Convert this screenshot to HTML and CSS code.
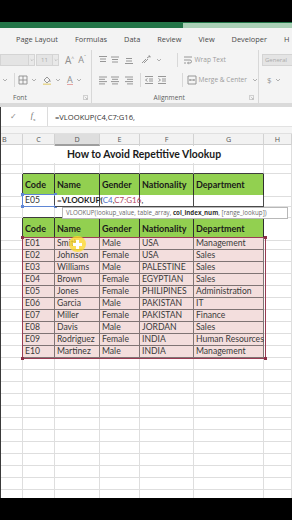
FILE: index.html
```html
<!DOCTYPE html>
<html lang="en">
<head>
  <meta charset="UTF-8" />
  <meta name="viewport" content="width=device-width, initial-scale=1" />
  <title>How to Avoid Repetitive Vlookup</title>
  <link rel="stylesheet" href="styles.css">
</head>
<body>
  <div class="screen">
    <div class="topbar"></div>
    <div class="titlebar"><div class="searchbox"></div></div>

    <!-- Pestañas -->
    <nav class="tabs">
      <span>Page Layout</span>
      <span>Formulas</span>
      <span>Data</span>
      <span>Review</span>
      <span>View</span>
      <span>Developer</span>
      <span>H</span>
    </nav>

    <!-- Cinta -->
    <div class="ribbon">
      <div class="group group-font">
        <div class="tool-row">
          <span class="box box-name"></span>
          <span class="dropbox"><svg class="chev" viewBox="0 0 6 4"><path d="M1 1l2 2 2-2"/></svg></span>
          <span class="box box-size">11</span>
          <span class="dropbox"><svg class="chev" viewBox="0 0 6 4"><path d="M1 1l2 2 2-2"/></svg></span>
          <span class="grow">A<sup>^</sup></span>
          <span class="grow shrink">A<sup>ˇ</sup></span>
        </div>
        <div class="tool-row">
          <svg class="chev chev-first" viewBox="0 0 6 4"><path d="M1 1l2 2 2-2"/></svg>
          <span class="vsep vsep-font"></span>
          <svg class="icon icon-border" viewBox="0 0 10 10"><path d="M1 1h8v8H1zM5 1v8M1 5h8"/></svg>
          <svg class="chev" viewBox="0 0 6 4"><path d="M1 1l2 2 2-2"/></svg>
          <svg class="icon icon-fill" viewBox="0 0 10 10"><path d="M2 5l3-3 3 3-3 3zM8 5.5v1.5"/><path class="bar-fill" d="M1 9.2h8"/></svg>
          <svg class="chev" viewBox="0 0 6 4"><path d="M1 1l2 2 2-2"/></svg>
          <span class="font-color">A</span>
          <svg class="chev" viewBox="0 0 6 4"><path d="M1 1l2 2 2-2"/></svg>
        </div>
        <div class="group-label">
          <span class="label-font">Font</span>
          <svg class="launcher launcher-font" viewBox="0 0 6 6"><path d="M0.5 0.5h5v5h-5zM2 2l3 3M3.5 5H5V3.5"/></svg>
        </div>
      </div>

      <div class="group group-align">
        <div class="tool-row">
          <svg class="icon icon-al first" viewBox="0 0 10 10"><path d="M1 1.5h8M2 4h6M2 6.5h6"/></svg>
          <svg class="icon icon-al" viewBox="0 0 10 10"><path d="M1 3h8M2 5.5h6M2 8h6" transform="translate(0 -1)"/></svg>
          <svg class="icon icon-al last" viewBox="0 0 10 10"><path d="M2 3.5h6M2 6h6M1 8.5h8"/></svg>
          <svg class="icon icon-orient" viewBox="0 0 12 10"><path d="M1 8l4-4M3 8l4-4M6 3l3-2M7.5 1H9v1.5"/></svg>
          <svg class="chev" viewBox="0 0 6 4"><path d="M1 1l2 2 2-2"/></svg>
          <span class="vsep vsep-align"></span>
          <svg class="icon icon-wrap" viewBox="0 0 10 10"><path d="M1 2h8M1 5h6a1.5 1.5 0 0 1 0 3H5M1 8h2M5.5 6.8L4.5 8l1 1.2"/></svg>
          <span class="cmd">Wrap Text</span>
        </div>
        <div class="tool-row">
          <svg class="icon icon-al first" viewBox="0 0 10 10"><path d="M1 2h8M1 4.3h6M1 6.6h8M1 8.9h6"/></svg>
          <svg class="icon icon-al" viewBox="0 0 10 10"><path d="M1 2h8M2 4.3h6M1 6.6h8M2 8.9h6"/></svg>
          <svg class="icon icon-al last" viewBox="0 0 10 10"><path d="M1 2h8M3 4.3h6M1 6.6h8M3 8.9h6"/></svg>
          <span class="vsep vsep-mid"></span>
          <svg class="icon icon-indent" viewBox="0 0 10 10"><path d="M1 1.5h8M5 4h4M5 6h4M1 8.5h8M3.5 3.5L1.5 5l2 1.5"/></svg>
          <svg class="icon icon-indent" viewBox="0 0 10 10"><path d="M1 1.5h8M5 4h4M5 6h4M1 8.5h8M1.5 3.5L3.5 5l-2 1.5"/></svg>
          <span class="vsep vsep-align"></span>
          <svg class="icon icon-merge" viewBox="0 0 10 10"><path d="M1 1h8v8H1zM2.5 5h5M3.5 4L2.5 5l1 1M6.5 4l1 1-1 1"/></svg>
          <span class="cmd">Merge &amp; Center</span>
          <svg class="chev chev-merge" viewBox="0 0 6 4"><path d="M1 1l2 2 2-2"/></svg>
        </div>
        <div class="group-label">
          <span class="label-align">Alignment</span>
          <svg class="launcher launcher-align" viewBox="0 0 6 6"><path d="M0.5 0.5h5v5h-5zM2 2l3 3M3.5 5H5V3.5"/></svg>
        </div>
      </div>

      <div class="group group-number">
        <div class="tool-row">
          <span class="box box-general">General</span>
        </div>
        <div class="tool-row">
          <span class="dollar">$</span>
          <svg class="chev" viewBox="0 0 6 4"><path d="M1 1l2 2 2-2"/></svg>
        </div>
      </div>
    </div>
    <div class="ribbon-edge"></div>

    <!-- Hoja -->
    <div class="sheet">
      <div class="formula-bar">
        <div class="fb-icons">
          <span class="fb-check">✓</span>
          <span class="fb-fx"><i>f</i><sub>x</sub></span>
        </div>
        <div class="fb-input">=VLOOKUP(C4,C7:G16,</div>
      </div>
      <div class="fb-gap"></div>

      <div class="col-heads">
        <div class="ch ch-b">B</div>
        <div class="ch">C</div>
        <div class="ch sel">D</div>
        <div class="ch">E</div>
        <div class="ch">F</div>
        <div class="ch">G</div>
        <div class="ch">H</div>
      </div>

      <div class="grid">
        <div class="row h18">
          <div class="cell"></div>
          <div class="cell title">How to Avoid Repetitive Vlookup</div>
          <div class="cell"></div>
        </div>
        <div class="row h11">
          <div class="cell"></div>
          <div class="cell eb"></div><div class="cell eb"></div><div class="cell eb"></div><div class="cell eb"></div><div class="cell eb"></div>
          <div class="cell"></div>
        </div>
        <div class="row h21">
          <div class="cell er"></div>
          <div class="cell hd">Code</div>
          <div class="cell hd">Name</div>
          <div class="cell hd">Gender</div>
          <div class="cell hd">Nationality</div>
          <div class="cell hd">Department</div>
          <div class="cell"></div>
        </div>
        <div class="row h12 row-edit">
          <div class="cell er"></div>
          <div class="cell tc">E05</div>
          <div class="cell tc formula"><b>=VLOOKUP(</b><span class="ref-blue">C4</span>,<span class="ref-red">C7:G16</span>,</div>
          <div class="cell tc"></div>
          <div class="cell tc"></div>
          <div class="cell tc"></div>
          <div class="cell"></div>
        </div>
        <div class="row h11">
          <div class="cell"></div>
          <div class="cell eb"></div><div class="cell eb"></div><div class="cell eb"></div><div class="cell eb"></div><div class="cell eb"></div>
          <div class="cell"></div>
        </div>
        <div class="row h20">
          <div class="cell er"></div>
          <div class="cell hd">Code</div>
          <div class="cell hd">Name</div>
          <div class="cell hd">Gender</div>
          <div class="cell hd">Nationality</div>
          <div class="cell hd">Department</div>
          <div class="cell"></div>
        </div>

        <div class="row h12"><div class="cell er"></div><div class="cell dc">E01</div><div class="cell dc">Smith</div><div class="cell dc">Male</div><div class="cell dc">USA</div><div class="cell dc">Management</div><div class="cell"></div></div>
        <div class="row h12"><div class="cell er"></div><div class="cell dc">E02</div><div class="cell dc">Johnson</div><div class="cell dc">Female</div><div class="cell dc">USA</div><div class="cell dc">Sales</div><div class="cell"></div></div>
        <div class="row h12"><div class="cell er"></div><div class="cell dc">E03</div><div class="cell dc">Williams</div><div class="cell dc">Male</div><div class="cell dc">PALESTINE</div><div class="cell dc">Sales</div><div class="cell"></div></div>
        <div class="row h12"><div class="cell er"></div><div class="cell dc">E04</div><div class="cell dc">Brown</div><div class="cell dc">Female</div><div class="cell dc">EGYPTIAN</div><div class="cell dc">Sales</div><div class="cell"></div></div>
        <div class="row h12"><div class="cell er"></div><div class="cell dc">E05</div><div class="cell dc">Jones</div><div class="cell dc">Female</div><div class="cell dc">PHILIPINES</div><div class="cell dc">Administration</div><div class="cell"></div></div>
        <div class="row h12"><div class="cell er"></div><div class="cell dc">E06</div><div class="cell dc">Garcia</div><div class="cell dc">Male</div><div class="cell dc">PAKISTAN</div><div class="cell dc">IT</div><div class="cell"></div></div>
        <div class="row h12"><div class="cell er"></div><div class="cell dc">E07</div><div class="cell dc">Miller</div><div class="cell dc">Female</div><div class="cell dc">PAKISTAN</div><div class="cell dc">Finance</div><div class="cell"></div></div>
        <div class="row h12"><div class="cell er"></div><div class="cell dc">E08</div><div class="cell dc">Davis</div><div class="cell dc">Male</div><div class="cell dc">JORDAN</div><div class="cell dc">Sales</div><div class="cell"></div></div>
        <div class="row h12"><div class="cell er"></div><div class="cell dc">E09</div><div class="cell dc">Rodriguez</div><div class="cell dc">Female</div><div class="cell dc">INDIA</div><div class="cell dc">Human Resources</div><div class="cell"></div></div>
        <div class="row h12"><div class="cell er"></div><div class="cell dc">E10</div><div class="cell dc">Martinez</div><div class="cell dc">Male</div><div class="cell dc">INDIA</div><div class="cell dc">Management</div><div class="cell"></div></div>

        <div class="row h12"><div class="cell"></div><div class="cell"></div><div class="cell"></div><div class="cell"></div><div class="cell"></div><div class="cell"></div><div class="cell"></div></div>
        <div class="row h12"><div class="cell"></div><div class="cell"></div><div class="cell"></div><div class="cell"></div><div class="cell"></div><div class="cell"></div><div class="cell"></div></div>
        <div class="row h12"><div class="cell"></div><div class="cell"></div><div class="cell"></div><div class="cell"></div><div class="cell"></div><div class="cell"></div><div class="cell"></div></div>
        <div class="row h12"><div class="cell"></div><div class="cell"></div><div class="cell"></div><div class="cell"></div><div class="cell"></div><div class="cell"></div><div class="cell"></div></div>
        <div class="row h12"><div class="cell"></div><div class="cell"></div><div class="cell"></div><div class="cell"></div><div class="cell"></div><div class="cell"></div><div class="cell"></div></div>
        <div class="row h12"><div class="cell"></div><div class="cell"></div><div class="cell"></div><div class="cell"></div><div class="cell"></div><div class="cell"></div><div class="cell"></div></div>
        <div class="row h12"><div class="cell"></div><div class="cell"></div><div class="cell"></div><div class="cell"></div><div class="cell"></div><div class="cell"></div><div class="cell"></div></div>
        <div class="row h12"><div class="cell"></div><div class="cell"></div><div class="cell"></div><div class="cell"></div><div class="cell"></div><div class="cell"></div><div class="cell"></div></div>
        <div class="row h12"><div class="cell"></div><div class="cell"></div><div class="cell"></div><div class="cell"></div><div class="cell"></div><div class="cell"></div><div class="cell"></div></div>
        <div class="row h12"><div class="cell"></div><div class="cell"></div><div class="cell"></div><div class="cell"></div><div class="cell"></div><div class="cell"></div><div class="cell"></div></div>
        <div class="row h12"><div class="cell"></div><div class="cell"></div><div class="cell"></div><div class="cell"></div><div class="cell"></div><div class="cell"></div><div class="cell"></div></div>
        <div class="row h12"><div class="cell"></div><div class="cell"></div><div class="cell"></div><div class="cell"></div><div class="cell"></div><div class="cell"></div><div class="cell"></div></div>

        <!-- Resaltados de referencias y ayuda de la fórmula -->
        <div class="ref-box ref-c4"><i class="knob tl"></i><i class="knob tr"></i><i class="knob bl"></i><i class="knob br"></i></div>
        <div class="ref-box ref-range"><i class="knob tl"></i><i class="knob tr"></i><i class="knob bl"></i><i class="knob br"></i></div>
        <div class="tooltip">VLOOKUP(lookup_value, table_array, <b>col_index_num</b>, [range_lookup])</div>
        <div class="cursor-spot"><span class="cursor-plus"></span></div>
      </div>
    </div>
    <div class="bottombar"></div>
  </div>
</body>
</html>
```

FILE: styles.css
```css
/* Base */
* {
  box-sizing: border-box;
}

body {
  margin: 0;
  background-color: #000;
  font-family: 'Open Sans', sans-serif;
}

.screen {
  width: 292px;
  height: 520px;
  overflow: hidden;
  display: flex;
  flex-direction: column;
  background-color: #000;
}

.topbar {
  flex: none;
  height: 22px;
}

.titlebar {
  flex: none;
  height: 6px;
  background-color: #237548;
  display: flex;
  justify-content: flex-end;
}

.searchbox {
  width: 109px;
  margin-top: 1px;
  background-color: #a9d0b6;
}

/* Pestañas */
.tabs {
  flex: none;
  height: 22px;
  background-color: #f3f3f3;
  display: flex;
  align-items: center;
  gap: 17px;
  padding-left: 16px;
  font-size: 7.4px;
  color: #4a4a4a;
  white-space: nowrap;
}

/* Cinta */
.ribbon {
  flex: none;
  height: 53px;
  background-color: #f4f4f4;
  display: flex;
  color: #8e8e8e;
}

.group {
  position: relative;
  display: flex;
  flex-direction: column;
  padding-top: 1px;
  border-right: 1px solid #d8d8d8;
}

.group-font {
  width: 96px;
}

.group-align {
  width: 168px;
}

.group-number {
  flex: 1;
  border-right: none;
}

.tool-row {
  height: 17px;
  display: flex;
  align-items: center;
  margin-bottom: 3px;
  white-space: nowrap;
}

.chev {
  width: 6px;
  height: 4px;
  fill: none;
  stroke: #9e9e9e;
  stroke-width: 0.8;
  margin-left: 3px;
}

.icon {
  width: 10px;
  height: 10px;
  fill: none;
  stroke: #8c8c8c;
  stroke-width: 0.9;
}

.box {
  height: 12px;
  background-color: #e4e4e4;
  border: 1px solid #d4d4d4;
  font-size: 6px;
  line-height: 10px;
  color: #aaa;
}

.box-name {
  width: 29px;
}

.dropbox {
  width: 6px;
  height: 12px;
  display: flex;
  align-items: center;
  justify-content: center;
  background-color: #e9e9e9;
  border: 1px solid #d4d4d4;
  border-left: none;
}

.dropbox .chev {
  margin-left: 0;
  width: 4px;
}

.box-size {
  width: 17px;
  margin-left: 1px;
  padding-left: 4px;
}

.grow {
  font-size: 10px;
  margin-left: 6px;
  color: #8e8e8e;
}

.grow sup {
  font-size: 5px;
}

.grow.shrink {
  font-size: 9px;
  margin-left: 4px;
}

.chev-first {
  margin-left: 2px;
}

.vsep {
  width: 1px;
  height: 14px;
  background-color: #d8d8d8;
}

.vsep-font {
  margin-left: 6px;
}

.icon-border {
  margin-left: 3px;
}

.icon-fill {
  margin-left: 5px;
}

.icon-fill .bar-fill {
  stroke: #e6d58a;
  stroke-width: 1.4;
}

.font-color {
  margin-left: 6px;
  font-size: 9px;
  line-height: 9px;
  color: #8e8e8e;
  border-bottom: 1.5px solid #e3a3a3;
}

.group-label {
  margin-top: auto;
  height: 12px;
  display: flex;
  align-items: center;
  font-size: 6.6px;
  color: #5e5e5e;
}

.label-font {
  margin-left: 13px;
}

.launcher {
  width: 5px;
  height: 5px;
  fill: none;
  stroke: #b0b0b0;
  stroke-width: 0.7;
}

.launcher-font {
  margin-left: auto;
  margin-right: 3px;
}

.icon-al {
  margin-left: 2px;
}

.icon-al.first {
  margin-left: 6px;
}

.icon-al.last {
  margin-left: 4px;
}

.icon-orient {
  width: 12px;
  margin-left: 7px;
}

.vsep-align {
  margin-left: 15px;
}

.icon-wrap {
  margin-left: 5px;
}

.cmd {
  margin-left: 2px;
  font-size: 6.6px;
  color: #9c9c9c;
}

.vsep-mid {
  margin-left: 6px;
}

.icon-indent {
  margin-left: 3px;
}

.icon-merge {
  margin-left: 4px;
}

.chev-merge {
  margin-left: 5px;
}

.label-align {
  margin-left: 62px;
}

.launcher-align {
  margin-left: auto;
  margin-right: 4px;
}

.box-general {
  width: 30px;
  margin-left: 3px;
  padding-left: 2px;
  border-right: none;
}

.dollar {
  margin-left: 8px;
  font-size: 8px;
  color: #959595;
}

.ribbon-edge {
  flex: none;
  height: 4px;
  background-color: #dadada;
}

/* Hoja de cálculo */
.sheet {
  flex: 1;
  display: flex;
  flex-direction: column;
  background-color: #fff;
  border-left: 1px solid #3a3a3a;
  overflow: hidden;
}

.formula-bar {
  flex: none;
  height: 20px;
  display: flex;
  align-items: center;
  background-color: #fff;
  border-bottom: 1px solid #e2e2e2;
}

.fb-icons {
  width: 47px;
  height: 100%;
  display: flex;
  align-items: center;
  border-right: 1px solid #dcdcdc;
}

.fb-check {
  margin-left: 9px;
  font-family: 'DejaVu Sans', sans-serif;
  font-size: 8px;
  color: #8a8a8a;
}

.fb-fx {
  margin-left: 14px;
  font-family: 'Liberation Serif', serif;
  font-size: 8px;
  color: #6a6a6a;
}

.fb-fx sub {
  font-size: 5px;
}

.fb-input {
  margin-left: 7px;
  font-size: 7.6px;
  color: #333;
}

.fb-gap {
  flex: none;
  height: 6px;
  background-color: #f5f5f5;
}

.col-heads {
  flex: none;
  height: 12px;
  display: grid;
  grid-template-columns: 22px 32px 45px 40px 54px 70px 28px;
  background-color: #f2f2f2;
  border-bottom: 1px solid #cfcfcf;
  border-top: 1px solid #e0e0e0;
}

.ch {
  border-right: 1px solid #d2d2d2;
  text-align: center;
  font-size: 7.2px;
  line-height: 10px;
  color: #555;
}

.ch-b {
  text-align: left;
  padding-left: 1px;
}

.ch.sel {
  background-color: #dedede;
  border-bottom: 2px solid #9e9e9e;
}

.grid {
  position: relative;
  font-family: 'Lato', sans-serif;
  font-size: 8.6px;
  color: #333;
}

.row {
  display: grid;
  grid-template-columns: 22px 32px 45px 40px 54px 70px 28px;
}

.h11 { height: 11px; }
.h12 { height: 12px; }
.h18 { height: 18px; }
.h20 { height: 20px; }
.h21 { height: 21px; }

.cell {
  border-right: 1px solid #dedede;
  border-bottom: 1px solid #dedede;
  padding-left: 2px;
  white-space: nowrap;
  line-height: 11px;
}

.title {
  grid-column: span 5;
  text-align: center;
  font-weight: 700;
  font-size: 10.4px;
  line-height: 19px;
  color: #1a1a1a;
}

.eb {
  border-bottom-color: #3d3d3d;
}

.er {
  border-right-color: #3d3d3d;
}

.hd {
  background-color: #92d050;
  border-color: #2f2f2f;
  font-weight: 700;
  font-size: 9px;
  line-height: 22px;
  color: #1a1a1a;
}

.tc {
  border-color: #4a4a4a;
  background-color: #fff;
}

/* Texto de la celda en edición, que se desborda sobre E4 */
.formula {
  position: relative;
  z-index: 1;
  overflow: visible;
  font-size: 8px;
  color: #1e1e1e;
}

.formula b {
  font-weight: 700;
}

.ref-blue {
  color: #4f74c8;
}

.ref-red {
  color: #b0465f;
}

.dc {
  background-color: #f3dedd;
  border-color: #7f7474;
  color: #3a3a3a;
}

/* Resaltados sobre la hoja */
.ref-box {
  position: absolute;
  pointer-events: none;
}

.ref-c4 {
  top: 49px;
  left: 21px;
  width: 34px;
  height: 13px;
  border: 1px solid #5f86d4;
}

.ref-range {
  top: 92px;
  left: 21px;
  width: 244px;
  height: 122px;
  border: 1.5px solid #9a3c54;
}

.knob {
  position: absolute;
  width: 3px;
  height: 3px;
}

.ref-c4 .knob {
  background-color: #5f86d4;
}

.ref-range .knob {
  background-color: #8c3048;
}

.knob.tl { top: -2px; left: -2px; }
.knob.tr { top: -2px; right: -2px; }
.knob.bl { bottom: -2px; left: -2px; }
.knob.br { bottom: -2px; right: -2px; }

.tooltip {
  position: absolute;
  top: 62px;
  left: 61px;
  width: 226px;
  height: 12px;
  padding-left: 3px;
  background-color: #fff;
  border: 1px solid #b8b8b8;
  font-family: 'Open Sans', sans-serif;
  font-size: 6.2px;
  line-height: 10px;
  color: #6a6a6a;
  white-space: nowrap;
  z-index: 2;
}

.tooltip b {
  color: #333;
}

.cursor-spot {
  position: absolute;
  top: 91px;
  left: 68px;
  width: 17px;
  height: 16px;
  border-radius: 50%;
  background-color: rgba(255, 222, 40, 0.75);
  display: flex;
  align-items: center;
  justify-content: center;
}

.cursor-plus {
  width: 9px;
  height: 9px;
  background:
    linear-gradient(#fff, #fff) center / 3px 9px no-repeat,
    linear-gradient(#fff, #fff) center / 9px 3px no-repeat;
  filter: drop-shadow(0 0 0.6px #000) drop-shadow(0 0 0.4px #000);
}

.bottombar {
  flex: none;
  height: 22px;
  background-color: #000;
}
```
